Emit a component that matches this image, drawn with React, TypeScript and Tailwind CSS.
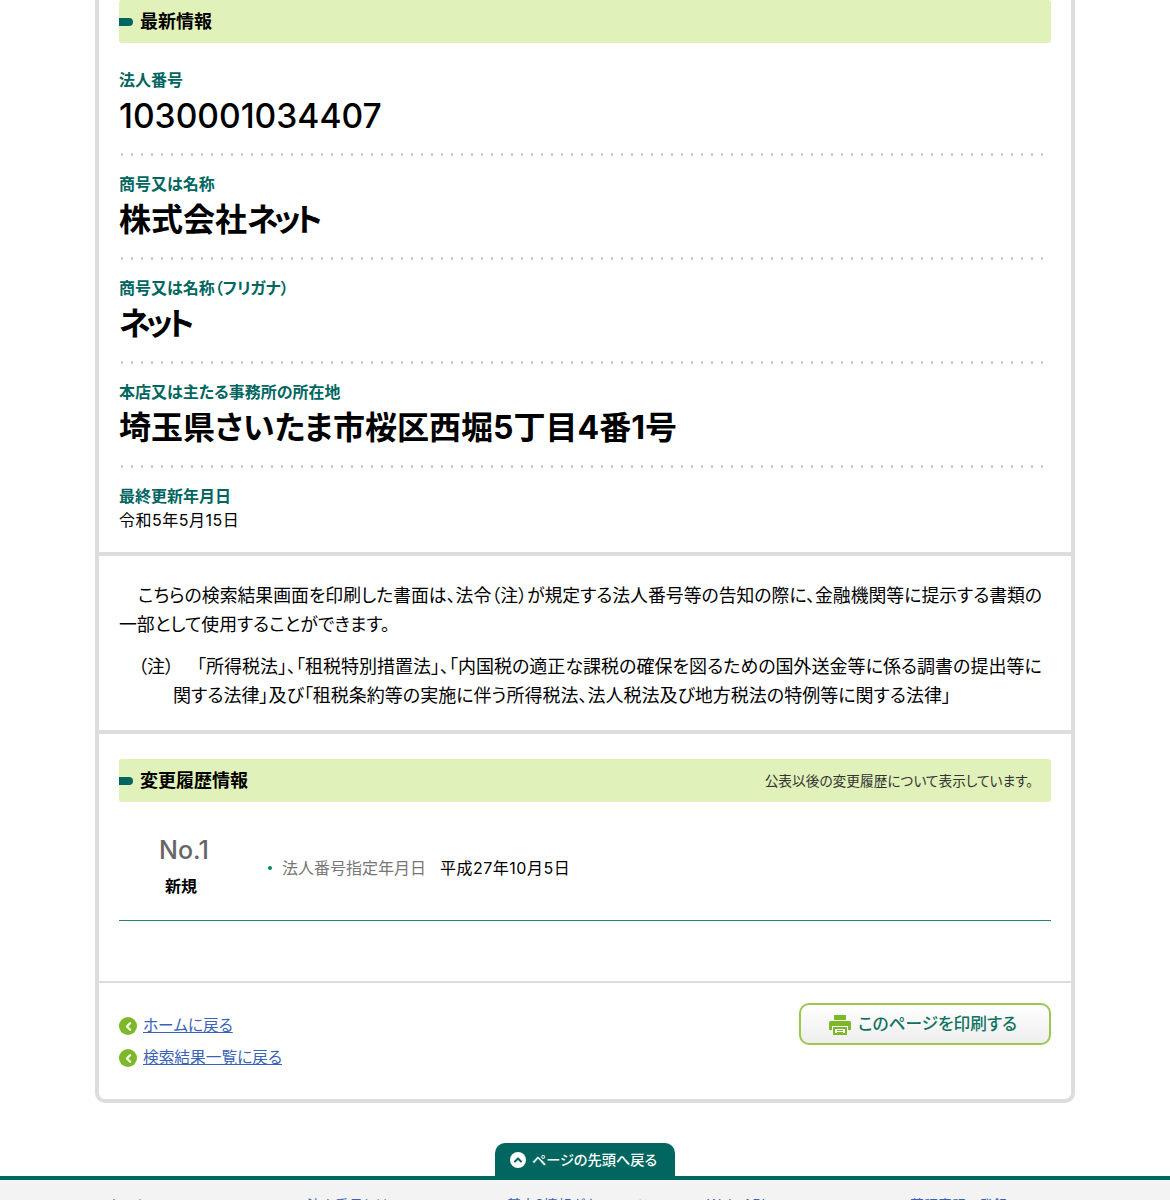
import { ChevronLeft, ChevronUp } from "lucide-react";

const fields = [
  { label: "法人番号", value: "1030001034407", number: true },
  { label: "商号又は名称", value: "株式会社", kana: "ネット" },
  { label: "商号又は名称（フリガナ）", value: "", kana: "ネット" },
  { label: "本店又は主たる事務所の所在地", value: "埼玉県さいたま市桜区西堀5丁目4番1号" },
];

const footerLinks = [
  { label: "ホーム", className: "w-[200px]" },
  { label: "法人番号とは", className: "w-[200px]" },
  { label: "基本3情報ダウンロード", className: "w-[200px]" },
  { label: "Web-API", className: "w-[203px]" },
  { label: "英語表記の登録", className: "" },
];

function SectionHeading({ title, note }: { title: string; note?: string }) {
  return (
    <div className="flex h-[43px] items-center justify-between rounded-[3px] bg-[#e0f1b9] pr-[18px]">
      <div className="flex items-center">
        <span className="h-2 w-[14px] rounded-r-full bg-[#00665f]" />
        <h2 className="ml-[7px] text-[18px] font-bold text-black">{title}</h2>
      </div>
      {note && <p className="pt-px text-[13.7px] text-[#333]">{note}</p>}
    </div>
  );
}

function BackLink({ label }: { label: string }) {
  return (
    <div className="flex h-8 items-center">
      <span className="flex h-[18px] w-[18px] items-center justify-center rounded-full bg-[#7cb82a]">
        <ChevronLeft size={13} strokeWidth={4} className="text-white" />
      </span>
      <a href="#" className="ml-[6px] text-[15.7px] text-[#3a63b8] underline">
        {label}
      </a>
    </div>
  );
}

export default function App() {
  return (
    <div className="h-[1200px] overflow-hidden bg-white font-['Inter','Noto_Sans_CJK_JP',sans-serif] text-black [font-feature-settings:'palt']">
      <main className="mx-auto h-[1103px] w-[980px] rounded-b-[10px] border-x-4 border-b-4 border-[#dddddd]">
        <section className="h-[552px] px-5">
          <SectionHeading title="最新情報" />
          <div className="mt-[26px]">
            {fields.map((field) => (
              <div key={field.label} className="h-[104px]">
                <p className="h-[22px] text-[16px] leading-[22px] font-bold text-[#00665f]">{field.label}</p>
                <p className={`mt-[2px] h-[46px] leading-[46px] ${field.number ? "text-[33.6px] font-medium" : "text-[32px] font-bold"}`}>
                  {field.value}
                  {field.kana && <span className="tracking-[-5px]">{field.kana}</span>}
                </p>
                <div className="mt-[14px] h-[3px] bg-[radial-gradient(circle,#cccccc_1.5px,transparent_1.5px)] bg-[length:10px_3px] bg-[position:-2px_0]" />
              </div>
            ))}
            <div>
              <p className="h-[22px] text-[16px] leading-[22px] font-bold text-[#00665f]">最終更新年月日</p>
              <p className="mt-[2px] text-[16px] leading-[22px] tracking-[0.5px]">令和5年5月15日</p>
            </div>
          </div>
        </section>

        <section className="h-[182px] border-y-4 border-[#dddddd] px-5 pt-[25px] text-[17.85px] leading-[29px]">
          <p className="indent-[19px]">
            こちらの検索結果画面を印刷した書面は、法令（注）が規定する法人番号等の告知の際に、金融機関等に提示する書類の一部として使用することができます。
          </p>
          <p className="mt-[13px] pl-[54px] -indent-[35px] text-[18px]">
            （注）<span className="inline-block w-[23px]" />「所得税法」、「租税特別措置法」、「内国税の適正な課税の確保を図るための国外送金等に係る調書の提出等に関する法律」及び「租税条約等の実施に伴う所得税法、法人税法及び地方税法の特例等に関する法律」
          </p>
        </section>

        <section className="h-[249px] border-b-2 border-[#dddddd] px-5 pt-[25px]">
          <SectionHeading title="変更履歴情報" note="公表以後の変更履歴について表示しています。" />
          <div className="flex h-[119px] items-center border-b border-[#1f8a5f] pt-[14px]">
            <div className="mb-2 w-[130px] text-center">
              <p className="text-[25px] leading-9 font-medium text-[#666]">No.1</p>
              <p className="mt-[7px] pr-[6px] text-[16px] leading-[22px] font-bold">新規</p>
            </div>
            <div className="ml-[19px] flex items-center text-[16px]">
              <span className="h-[4px] w-[4px] rounded-full bg-[#00875f]" />
              <span className="ml-[10px] text-[#777]">法人番号指定年月日</span>
              <span className="ml-[14px] tracking-[0.5px]">平成27年10月5日</span>
            </div>
          </div>
        </section>

        <section className="flex justify-between px-5 pt-[20px]">
          <div className="pt-[7px]">
            <BackLink label="ホームに戻る" />
            <BackLink label="検索結果一覧に戻る" />
          </div>
          <button className="flex h-[42px] w-[252px] items-center justify-center rounded-[10px] border-2 border-[#9cc84f] bg-linear-to-b from-white to-[#eeeeee] pt-px pr-[4px] text-[16.7px] font-medium text-[#11735f]">
            <svg viewBox="0 0 22 20" className="mr-[7px] h-5 w-[22px]" aria-hidden="true">
              <path fill="#7cb82a" d="M5 0h12v5H5z" />
              <path fill="#7cb82a" d="M2 6h18a2 2 0 0 1 2 2v7h-3v-4H3v4H0V8a2 2 0 0 1 2-2z" />
              <path fill="#7cb82a" d="M4 12h14v8H4z" />
              <path fill="#ffffff" d="M6 14h10v4H6z" />
              <path fill="#7cb82a" d="M8 15h6v1H8zM8 17h6v1H8z" />
            </svg>
            このページを印刷する
          </button>
        </section>
      </main>

      <div className="mt-10 flex justify-center">
        <a href="#" className="flex h-[33px] w-[180px] items-center justify-center rounded-t-[10px] bg-[#00665f] pt-px pr-[3px] text-[14.2px] font-medium text-white">
          <span className="mr-[6px] flex h-4 w-4 items-center justify-center rounded-full bg-white">
            <ChevronUp size={12} strokeWidth={4} className="text-[#00665f]" />
          </span>
          ページの先頭へ戻る
        </a>
      </div>
      <footer className="h-[30px] border-t-4 border-[#00665f] bg-[#f3f3f3]">
        <ul className="mx-auto flex w-[980px] pt-[14px] pl-3 text-[14px] text-[#3a63b8]">
          {footerLinks.map((link) => (
            <li key={link.label} className={link.className}>
              {link.label}
            </li>
          ))}
        </ul>
      </footer>
    </div>
  );
}
